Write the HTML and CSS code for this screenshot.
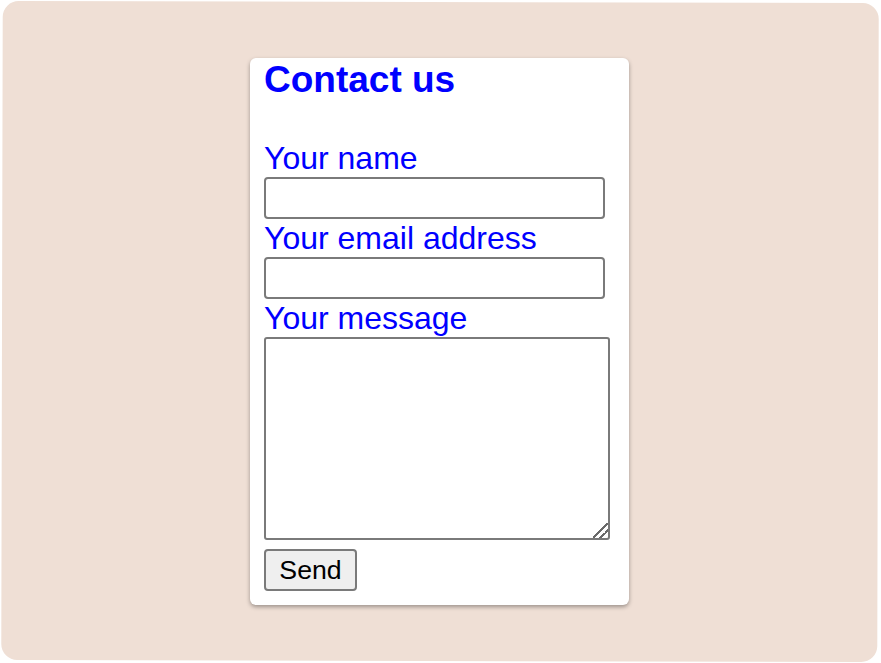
FILE: index.html
```html
<!DOCTYPE html>
<html lang="en">
  <head>
    <meta charset="utf-8" />
    <meta name="viewport" content="width=device-width, initial-scale=1.0" />
    <title>Contact us</title>
    <link rel="stylesheet" href="styles.css">
  </head>

  <body>
    <main class="page">
      <form class="contact-card" onsubmit="return false">
        <h1 class="contact-title">Contact us</h1>

        <label class="field-label" for="name">Your name</label>
        <input id="name" class="field-input" type="text" />

        <label class="field-label" for="email">Your email address</label>
        <input id="email" class="field-input" type="email" />

        <label class="field-label" for="message">Your message</label>
        <textarea id="message" class="field-message"></textarea>

        <button class="send-btn" type="submit">Send</button>
      </form>
    </main>
  </body>
</html>
```

FILE: styles.css
```css
body {
  margin: 0;
  padding: 0;
  background-color: #ffffff;
  font-family: "Liberation Sans", Arial, sans-serif;
}

.page {
  position: relative;
  display: flex;
  justify-content: center;
  align-items: center;
  height: 100vh; /* full window */
}

/* beige backdrop, tilted a hair */
.page::before {
  content: "";
  position: absolute;
  top: 2px;
  left: 2px;
  right: 3px;
  bottom: 2px;
  background-color: #efdfd5;
  border-radius: 16px;
  transform: rotate(0.13deg);
}

.contact-card {
  position: relative;
  display: flex;
  flex-direction: column;
  align-items: flex-start;
  width: 379px;
  margin-right: 2px;
  box-sizing: border-box;
  padding: 1px 19px 14px 14px;
  background-color: #ffffff;
  border-radius: 6px;
  box-shadow: 0 2px 4px rgba(0, 0, 0, 0.35);
}

.contact-title {
  margin: 0 0 38px;
  font-size: 37px;
  line-height: 42px;
  font-weight: bold;
  color: #0000ff;
}

.field-label {
  display: block;
  font-size: 32px;
  line-height: 38px;
  color: #0000ff;
}

.field-input,
.field-message {
  box-sizing: border-box;
  margin: 0;
  border: 2px solid #7a7a7a;
  border-radius: 4px;
  background-color: #ffffff;
  font-family: inherit;
  font-size: 24px;
}

.field-input {
  width: 341px;
  height: 42px;
  padding: 2px 6px;
}

.field-message {
  display: block;
  width: 346px;
  height: 203px;
  padding: 4px;
  border-radius: 3px;
}

/* bigger grip, two slanted strokes */
.field-message::-webkit-resizer {
  background: linear-gradient(to bottom right,
    transparent 0 46%, #6a6a6a 46% 54%,
    transparent 54% 70%, #6a6a6a 70% 78%,
    transparent 78%);
}

.send-btn {
  margin-top: 9px;
  width: 93px;
  height: 42px;
  padding: 0;
  border: 2px solid #7a7a7a;
  border-radius: 4px;
  background-color: #efefef;
  color: #000000;
  font-family: inherit;
  font-size: 26.7px;
  cursor: pointer;
}
```
